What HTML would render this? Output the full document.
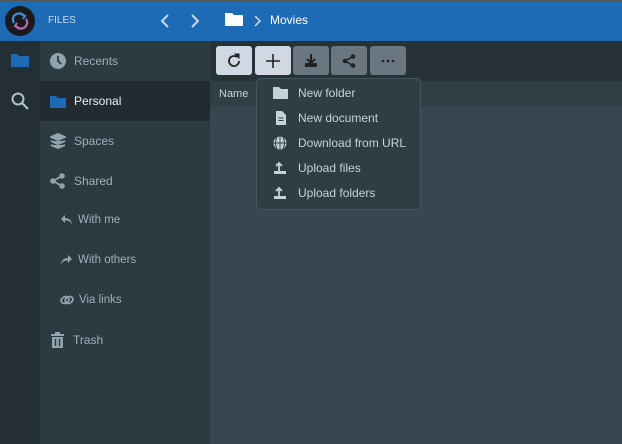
<!DOCTYPE html><html><head><style>
*{margin:0;padding:0;box-sizing:border-box}
body{width:622px;height:444px;overflow:hidden;font-family:"Liberation Sans",sans-serif;background:#37474f;position:relative;font-size:12px}
.abs{position:absolute}
.hdr{left:0;top:0;width:622px;height:41px;background:#1e6bb5;border-top:1px solid #555}
.rail{left:0;top:41px;width:40px;height:403px;background:#232f35}
.nav{left:40px;top:41px;width:170px;height:403px;background:#2c3a41}
.navi{position:absolute;left:0;width:170px;height:40px;color:#9fb0b8;font-size:12px;display:flex;align-items:center;padding-left:10px}
.navi svg{margin-right:8px}
.sub{padding-left:20px;font-size:11.5px}
.sub svg{margin-right:5px}
.tb{left:210px;top:41px;width:412px;height:40px;background:#263238}
.btn{position:absolute;top:46px;width:36px;height:29px;border-radius:3px;display:flex;align-items:center;justify-content:center}
.light{background:#d0d8e4}.dark{background:#6b7780}
.colh{left:210px;top:81px;width:412px;height:26px;background:#303f46;color:#c7d2d8;font-size:11px;padding:7px 9px}
.menu{left:256px;top:78px;width:165px;height:132px;background:#2f3e45;border:1px solid #45555d;border-radius:5px}
.mi{position:absolute;left:16px;color:#c7d2d8;font-size:12px;display:flex;align-items:center}
.mi svg{margin-right:10px}
</style></head><body>
<div class="abs hdr">
<div class="abs" style="left:5px;top:5px;width:30px;height:30px;border-radius:50%;background:#1a1a1a">
<svg width="30" height="30" viewBox="0 0 30 30"><path d="M9 17a6 6 0 0 1 10-7" stroke="#3b8fd6" stroke-width="2.2" fill="none"/><path d="M21 13a6 6 0 0 1-10 7" stroke="#b66ab0" stroke-width="2.2" fill="none"/><path d="M17 8l3 2-2 3" stroke="#3b8fd6" stroke-width="2" fill="none"/><path d="M13 22l-3-2 2-3" stroke="#b66ab0" stroke-width="2" fill="none"/></svg></div>
<div class="abs" style="left:48px;top:14px;color:#c9d9ea;font-size:10px">FILES</div>
<svg class="abs" style="left:159px;top:13px" width="40" height="14"><path d="M9 1L3 7l6 6M33 1l6 6-6 6" stroke="#c9d9ea" stroke-width="2" fill="none"/></svg>
<svg class="abs" style="left:224px;top:10px" width="20" height="16"><path d="M1 2h7l2 2h9v11H1z" fill="#fff"/></svg>
<svg class="abs" style="left:254px;top:14px" width="8" height="12"><path d="M1 1l5 5-5 5" stroke="#c9d9ea" stroke-width="1.5" fill="none"/></svg>
<div class="abs" style="left:270px;top:12px;color:#fff;font-size:12px">Movies</div>
</div>
<div class="abs rail">
<svg class="abs" style="left:11px;top:12px" width="18" height="14"><path d="M0 1h6l2 2h10v11H0z" fill="#1e6bb5"/></svg>
<svg class="abs" style="left:11px;top:51px" width="18" height="18"><circle cx="7" cy="7" r="5.5" stroke="#b0c0c8" stroke-width="2" fill="none"/><path d="M11 11l6 6" stroke="#b0c0c8" stroke-width="2.2"/></svg>
</div>
<div class="abs nav">
<div class="navi" style="top:0"><svg width="16" height="16"><circle cx="8" cy="8" r="8" fill="#90a4ae"/><path d="M8 3v5l3 3" stroke="#2c3a41" stroke-width="1.8" fill="none"/></svg>Recents</div>
<div class="navi" style="top:40px;background:#212b31;color:#eef"><svg width="16" height="13"><path d="M0 1h6l2 2h8v10H0z" fill="#1e6bb5"/></svg>Personal</div>
<div class="navi" style="top:80px"><svg width="16" height="16"><path d="M8 1l7 3-7 3-7-3zM1 8l7 3 7-3M1 12l7 3 7-3" stroke="#90a4ae" stroke-width="2" fill="#90a4ae"/></svg>Spaces</div>
<div class="navi" style="top:120px"><svg width="16" height="16"><circle cx="12" cy="3" r="2.8" fill="#90a4ae"/><circle cx="3" cy="8" r="2.8" fill="#90a4ae"/><circle cx="12" cy="13" r="2.8" fill="#90a4ae"/><path d="M12 3L3 8l9 5" stroke="#90a4ae" stroke-width="1.8" fill="none"/></svg>Shared</div>
<div class="navi sub" style="top:159px"><svg width="13" height="12"><path d="M5 1L1 5l4 4V6.5c4 0 6 1 7 5 0-5-3-7.5-7-7.5z" fill="#90a4ae"/></svg>With me</div>
<div class="navi sub" style="top:199px"><svg width="13" height="12"><path d="M8 1l4 4-4 4V6.5c-4 0-6 1-7 5 0-5 3-7.5 7-7.5z" fill="#90a4ae"/></svg>With others</div>
<div class="navi sub" style="top:239px"><svg width="14" height="12"><rect x="1" y="3" width="8" height="6" rx="3" stroke="#90a4ae" stroke-width="1.8" fill="none" transform="rotate(-30 5 6)"/><rect x="5" y="3" width="8" height="6" rx="3" stroke="#90a4ae" stroke-width="1.8" fill="none" transform="rotate(-30 9 6)"/></svg>Via links</div>
<div class="navi" style="top:279px"><svg width="15" height="16"><path d="M1 3h13M5 1h5" stroke="#90a4ae" stroke-width="2"/><path d="M2 5h11v11H2z" fill="#90a4ae"/><path d="M5.5 7v7M9.5 7v7" stroke="#2c3a41" stroke-width="1.4"/></svg>Trash</div>
</div>
<div class="abs tb"></div>
<div class="btn light" style="left:216px"><svg width="16" height="16"><path d="M13 8a5 5 0 1 1-2-4" stroke="#222" stroke-width="1.8" fill="none"/><path d="M9 1h4v4z" fill="#222" stroke="#222"/></svg></div>
<div class="btn light" style="left:255px"><svg width="14" height="14"><path d="M7 0v14M0 7h14" stroke="#222" stroke-width="1.6"/></svg></div>
<div class="btn dark" style="left:293px"><svg width="14" height="14"><path d="M7 0v8M3 5l4 4 4-4" stroke="#222" stroke-width="2" fill="none"/><path d="M1 9v4h12V9" fill="#222"/></svg></div>
<div class="btn dark" style="left:331px"><svg width="14" height="14"><circle cx="11" cy="2.5" r="2.3" fill="#222"/><circle cx="3" cy="7" r="2.3" fill="#222"/><circle cx="11" cy="11.5" r="2.3" fill="#222"/><path d="M11 2.5L3 7l8 4.5" stroke="#222" stroke-width="1.5" fill="none"/></svg></div>
<div class="btn dark" style="left:370px"><svg width="14" height="4"><circle cx="2" cy="2" r="1.3" fill="#222"/><circle cx="7" cy="2" r="1.3" fill="#222"/><circle cx="12" cy="2" r="1.3" fill="#222"/></svg></div>
<div class="abs colh">Name</div>
<div class="abs menu">
<div class="mi" style="top:7px"><svg width="15" height="12"><path d="M0 0h6l2 2h7v10H0z" fill="#c7d2d8"/></svg>New folder</div>
<div class="mi" style="top:32px"><svg width="15" height="14"><path d="M3 0h6l4 4v10H3z" fill="#c7d2d8"/><path d="M5.5 7h5M5.5 9.5h5" stroke="#2f3e45" stroke-width="1"/></svg>New document</div>
<div class="mi" style="top:57px"><svg width="15" height="14"><circle cx="7" cy="7" r="6.5" fill="#c7d2d8"/><path d="M0 7h14M7 0v14M4 1c-2 4-2 8 0 12M10 1c2 4 2 8 0 12" stroke="#2f3e45" stroke-width="1" fill="none"/></svg>Download from URL</div>
<div class="mi" style="top:82px"><svg width="15" height="14"><path d="M6 10V2M3 5l3-3 3 3" stroke="#c7d2d8" stroke-width="1.8" fill="none"/><path d="M1 10h12v3H1z" fill="#c7d2d8"/></svg>Upload files</div>
<div class="mi" style="top:107px"><svg width="15" height="14"><path d="M6 10V2M3 5l3-3 3 3" stroke="#c7d2d8" stroke-width="1.8" fill="none"/><path d="M1 10h12v3H1z" fill="#c7d2d8"/></svg>Upload folders</div>
</div>
</body></html>
